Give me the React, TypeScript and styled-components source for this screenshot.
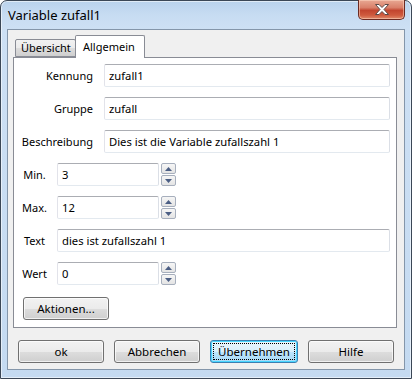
import React from "react";
import styled, { createGlobalStyle } from "styled-components";

const GlobalStyle = createGlobalStyle`
  html, body {
    margin: 0;
    padding: 0;
    background: #ffffff;
  }
  body {
    font-family: "Noto Sans", "Open Sans", Arial, sans-serif;
    font-size: 11px;
    color: #000;
  }
`;

interface Field {
  label: string;
  value: string;
  spin?: boolean;
  wide?: boolean;
}

const topFields: Field[] = [
  { label: "Kennung", value: "zufall1" },
  { label: "Gruppe", value: "zufall" },
  { label: "Beschreibung", value: "Dies ist die Variable zufallszahl 1" },
];

const bottomFields: Field[] = [
  { label: "Min.", value: "3", spin: true },
  { label: "Max.", value: "12", spin: true },
  { label: "Text", value: "dies ist zufallszahl 1", wide: true },
  { label: "Wert", value: "0", spin: true },
];

const Spinner: React.FC = () => (
  <SpinBox>
    <SpinButton>
      <svg width="7" height="4" viewBox="0 0 7 4">
        <path d="M0 4 L3.5 0 L7 4 Z" fill="#4b5e84" />
      </svg>
    </SpinButton>
    <SpinButton>
      <svg width="7" height="4" viewBox="0 0 7 4">
        <path d="M0 0 L7 0 L3.5 4 Z" fill="#4b5e84" />
      </svg>
    </SpinButton>
  </SpinBox>
);

const App: React.FC = () => {
  return (
    <>
      <GlobalStyle />
      <Window>
        <TitleBar>
          <Title>Variable zufall1</Title>
          <CloseButton>
            <svg width="16" height="11" viewBox="0 0 16 11">
              <path
                d="M1.5 0.5 L5 0.5 L8 3.5 L11 0.5 L14.5 0.5 L10 5.5 L14.5 10.5 L11 10.5 L8 7.5 L5 10.5 L1.5 10.5 L6 5.5 Z"
                fill="#ffffff"
                stroke="#5a4a48"
                strokeWidth="1"
                strokeLinejoin="round"
              />
            </svg>
          </CloseButton>
        </TitleBar>

        <Client>
          <TabStrip>
            <Tab>Übersicht</Tab>
            <Tab active>Allgemein</Tab>
          </TabStrip>

          <Panel>
            {topFields.map((f) => (
              <Row key={f.label}>
                <Label width={71} align="flex-end" gap={11}>
                  {f.label}
                </Label>
                <TextInput readOnly value={f.value} />
              </Row>
            ))}
            {bottomFields.map((f) => (
              <Row key={f.label}>
                <Label width={25} align="center" gap={10}>
                  {f.label}
                </Label>
                {f.wide ? (
                  <TextInput readOnly value={f.value} />
                ) : (
                  <>
                    <NumberInput readOnly value={f.value} />
                    <Spinner />
                  </>
                )}
              </Row>
            ))}
            <ActionButton>Aktionen...</ActionButton>
          </Panel>

          <ButtonRow>
            <DialogButton>ok</DialogButton>
            <DialogButton>Abbrechen</DialogButton>
            <DialogButton primary>
              <FocusRing>Übernehmen</FocusRing>
            </DialogButton>
            <DialogButton>Hilfe</DialogButton>
          </ButtonRow>
        </Client>
      </Window>
    </>
  );
};

export default App;

// window chrome
const Window = styled.div`
  width: 412px;
  height: 379px;
  box-sizing: border-box;
  border: 1px solid #3b4756;
  border-radius: 7px 7px 0 0;
  background: linear-gradient(
    to bottom,
    #b9d2ec 0px,
    #c7dcf2 14px,
    #cde0f4 28px,
    #c4daf1 100%
  );
  box-shadow: inset 0 0 0 1px rgba(255, 255, 255, 0.55);
  display: flex;
  flex-direction: column;
  padding: 0 6px 8px 6px;
`;

const TitleBar = styled.div`
  height: 28px;
  display: flex;
  align-items: flex-start;
  justify-content: space-between;
`;

const Title = styled.div`
  margin: 5px 0 0 1px;
  font-size: 13px;
  color: #000;
`;

const CloseButton = styled.div`
  width: 47px;
  height: 20px;
  margin-top: -1px;
  box-sizing: border-box;
  border: 1px solid #6b2a22;
  border-top: none;
  border-radius: 0 0 5px 5px;
  background: linear-gradient(
    to bottom,
    #e8a893 0%,
    #d9806a 40%,
    #c2452f 55%,
    #cf5a3e 80%,
    #e08a6a 100%
  );
  box-shadow: inset 0 0 0 1px rgba(255, 220, 200, 0.5);
  display: flex;
  align-items: center;
  justify-content: center;
`;

const Client = styled.div`
  flex: 1;
  border: 1px solid #8496aa;
  background: #f0f0f0;
  padding: 5px 7px 0 5px;
  display: flex;
  flex-direction: column;
`;

// tabs
const TabStrip = styled.div`
  height: 22px;
  padding-left: 2px;
  display: flex;
  align-items: flex-end;
`;

const Tab = styled.div<{ active?: boolean }>`
  box-sizing: border-box;
  height: ${({ active }) => (active ? "23px" : "18px")};
  width: ${({ active }) => (active ? "70px" : "61px")};
  margin-left: ${({ active }) => (active ? "-1px" : "0")};
  margin-bottom: ${({ active }) => (active ? "-1px" : "0")};
  position: relative;
  z-index: ${({ active }) => (active ? 1 : 0)};
  border: 1px solid #898c95;
  border-bottom: ${({ active }) => (active ? "none" : "1px solid #898c95")};
  border-radius: 2px 2px 0 0;
  background: ${({ active }) =>
    active
      ? "#ffffff"
      : "linear-gradient(to bottom, #f2f2f2 0%, #ebebeb 50%, #dddddd 51%, #cfcfcf 100%)"};
  padding: ${({ active }) => (active ? "3px 0 0 7px" : "0 0 0 5px")};
  font-size: 11px;
  line-height: 16px;
  white-space: nowrap;
`;

const Panel = styled.div`
  border: 1px solid #898c95;
  background: #ffffff;
  padding: 6px 6px 7px 8px;
  display: flex;
  flex-direction: column;
  gap: 10px;
`;

// form rows
const Row = styled.div`
  display: flex;
  align-items: center;
  height: 23px;
`;

const Label = styled.div<{ width: number; align: string; gap: number }>`
  flex: none;
  width: ${({ width }) => width}px;
  margin-right: ${({ gap }) => gap}px;
  display: flex;
  justify-content: ${({ align }) => align};
  white-space: nowrap;
  font-size: 11px;
`;

const TextInput = styled.input`
  flex: 1;
  min-width: 0;
  height: 23px;
  box-sizing: border-box;
  border: 1px solid;
  border-color: #abadb3 #dbdfe6 #e3e9ef #e2e3ea;
  border-radius: 2px;
  background: #ffffff;
  padding: 0 4px;
  font-family: "Noto Sans", "Open Sans", Arial, sans-serif;
  font-size: 11.25px;
  color: #000;
  outline: none;
`;

const NumberInput = styled(TextInput)`
  flex: none;
  width: 102px;
`;

const SpinBox = styled.div`
  margin-left: 2px;
  display: flex;
  flex-direction: column;
  gap: 1px;
  align-self: flex-start;
`;

const SpinButton = styled.div`
  width: 15px;
  height: 11px;
  box-sizing: border-box;
  border: 1px solid #a7afbd;
  border-radius: 2px;
  background: linear-gradient(to bottom, #f6f6f6 0%, #e4e4e4 100%);
  display: flex;
  align-items: center;
  justify-content: center;
`;

// buttons
const ButtonBase = styled.div`
  height: 23px;
  box-sizing: border-box;
  border: 1px solid #707070;
  border-radius: 3px;
  background: linear-gradient(
    to bottom,
    #f2f2f2 0%,
    #ebebeb 50%,
    #dddddd 51%,
    #cfcfcf 100%
  );
  box-shadow: inset 0 0 0 1px rgba(255, 255, 255, 0.7);
  display: flex;
  align-items: center;
  justify-content: center;
  font-size: 11.5px;
  white-space: nowrap;
`;

const ActionButton = styled(ButtonBase)`
  width: 86px;
  margin: 2px 0 0 1px;
`;

const ButtonRow = styled.div`
  display: flex;
  gap: 10px;
  margin-top: 12px;
  padding-left: 5px;
`;

const DialogButton = styled(ButtonBase)<{ primary?: boolean }>`
  width: ${({ primary }) => (primary ? "88px" : "86px")};
  border-color: ${({ primary }) => (primary ? "#3c7fb1" : "#707070")};
  background: ${({ primary }) =>
    primary
      ? "linear-gradient(to bottom, #eaf6fd 0%, #d9f0fc 50%, #bee6fd 51%, #a7d9f5 100%)"
      : "linear-gradient(to bottom, #f2f2f2 0%, #ebebeb 50%, #dddddd 51%, #cfcfcf 100%)"};
  box-shadow: ${({ primary }) =>
    primary
      ? "inset 0 0 0 1px #48d6ff"
      : "inset 0 0 0 1px rgba(255, 255, 255, 0.7)"};
`;

const FocusRing = styled.div`
  align-self: stretch;
  flex: 1;
  margin: 2px;
  border: 1px dotted #000;
  display: flex;
  align-items: center;
  justify-content: center;
`;
